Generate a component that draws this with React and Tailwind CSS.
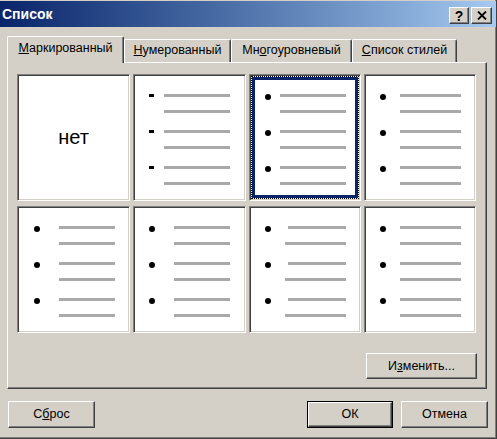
import React from "react";

const raised =
  "bg-[#d4d0c8] border-t border-l border-t-white border-l-white border-r border-b border-r-[#404040] border-b-[#404040] shadow-[inset_-1px_-1px_0_#808080]";

const cellBase =
  "bg-white h-[127px] border border-t-[#808080] border-l-[#808080] border-b-white border-r-white shadow-[inset_1px_1px_0_#404040,inset_-1px_-1px_0_#d4d0c8]";

function Bullet({ ml }) {
  return <div className={`${ml} w-[6px] h-[6px] rounded-full bg-black shrink-0`} />;
}

function Dash() {
  return <div className="ml-[15px] w-[5px] h-[3px] bg-black shrink-0" />;
}

function Row({ marker, line, children }) {
  return (
    <div className="flex h-[3px] items-start">
      <div className={`${marker} shrink-0 flex h-[3px] items-start`}>{children}</div>
      <div className={`${line} h-[3px] bg-[#a9a9a9]`} />
    </div>
  );
}

function Groups({ rows }) {
  return (
    <div className="flex flex-col gap-[17px]">
      {rows.map((g, i) => (
        <div key={i} className="flex flex-col gap-[13px]">
          {g}
        </div>
      ))}
    </div>
  );
}

function Cell2() {
  const group = (k) => [
    <Row key={k + "a"} marker="w-[30px]" line="w-[66px]">
      <Dash />
    </Row>,
    <Row key={k + "b"} marker="w-[30px]" line="w-[66px]" />,
  ];
  return (
    <div className={`${cellBase} pt-[19px]`}>
      <Groups rows={[group(1), group(2), group(3)]} />
    </div>
  );
}

function Cell3() {
  const group = (k) => [
    <Row key={k + "a"} marker="w-[25px]" line="w-[66px]">
      <Bullet ml="ml-[10px]" />
    </Row>,
    <Row key={k + "b"} marker="w-[25px]" line="w-[66px]" />,
  ];
  return (
    <div className={`${cellBase} p-[1px]`}>
      <div className="h-full border border-dotted border-black">
        <div className="h-full border-[3px] border-[#0a246a] pt-[14px]">
          <Groups rows={[group(1), group(2), group(3)]} />
        </div>
      </div>
    </div>
  );
}

function Cell4() {
  const group = (k) => [
    <Row key={k + "a"} marker="w-[35px]" line="w-[61px]">
      <Bullet ml="ml-[15px]" />
    </Row>,
    <Row key={k + "b"} marker="w-[35px]" line="w-[61px]" />,
  ];
  return (
    <div className={`${cellBase} pt-[19px]`}>
      <Groups rows={[group(1), group(2), group(3)]} />
    </div>
  );
}

function Cell5() {
  const group = (k) => [
    <Row key={k + "a"} marker="w-[41px]" line="w-[56px]">
      <Bullet ml="ml-[16px]" />
    </Row>,
    <Row key={k + "b"} marker="w-[41px]" line="w-[56px]" />,
  ];
  return (
    <div className={`${cellBase} pt-[19px]`}>
      <Groups rows={[group(1), group(2), group(3)]} />
    </div>
  );
}

function Cell6() {
  const group = (k) => [
    <Row key={k + "a"} marker="w-[40px]" line="w-[56px]">
      <Bullet ml="ml-[15px]" />
    </Row>,
    <Row key={k + "b"} marker="w-[40px]" line="w-[56px]" />,
  ];
  return (
    <div className={`${cellBase} pt-[19px]`}>
      <Groups rows={[group(1), group(2), group(3)]} />
    </div>
  );
}

function Cell7() {
  const group = (k) => [
    <Row key={k + "a"} marker="w-[38px]" line="w-[58px]">
      <Bullet ml="ml-[15px]" />
    </Row>,
    <Row key={k + "b"} marker="w-[35px]" line="w-[61px]" />,
  ];
  return (
    <div className={`${cellBase} pt-[19px]`}>
      <Groups rows={[group(1), group(2), group(3)]} />
    </div>
  );
}

function Tab({ active, w, children }) {
  if (active) {
    return (
      <div
        className={`${w} h-[27px] -mb-[1px] relative z-10 bg-[#d4d0c8] rounded-t-[2px] border-t border-l border-white border-r border-r-[#404040] shadow-[inset_-1px_0_0_#808080] flex items-center justify-center pb-[3px] text-[12.5px]`}
      >
        {children}
      </div>
    );
  }
  return (
    <div
      className={`${w} h-[23px] bg-[#d4d0c8] rounded-t-[2px] border-t border-l border-white border-r border-r-[#404040] shadow-[inset_-1px_0_0_#808080] flex items-center justify-center pb-[1px] text-[12.5px]`}
    >
      {children}
    </div>
  );
}

export default function App() {
  return (
    <div className="w-[497px] h-[439px] overflow-hidden bg-[#d4d0c8] font-['Liberation_Sans',Arial,sans-serif] text-black">
      <div className="w-[497px] h-[439px] pt-[1px] border-r border-b border-r-[#404040] border-b-[#404040] shadow-[inset_-1px_-1px_0_#808080] flex flex-col">
        {/* Title bar */}
        <div className="h-[26px] shrink-0 flex items-start justify-between bg-linear-to-r from-[#0a246a] to-[#a6caf0] pl-[2px] pr-[4px]">
          <div className="h-[26px] flex items-center text-white font-bold text-[14px]">Список</div>
          <div className="flex gap-[2px] pt-[6px]">
            <div className={`${raised} w-[20px] h-[17px] flex items-center justify-center text-[14px] font-bold leading-none`}>
              ?
            </div>
            <div className={`${raised} w-[21px] h-[17px] flex items-center justify-center`}>
              <svg width="10" height="9" viewBox="0 0 10 9">
                <path d="M1 0.5 L9 8.5 M9 0.5 L1 8.5" stroke="black" strokeWidth="1.8" fill="none" />
              </svg>
            </div>
          </div>
        </div>

        {/* Tabs */}
        <div className="mt-[9px] h-[26px] shrink-0 flex items-end pl-[7px]">
          <Tab active w="w-[117px]">
            <span>
              <u>М</u>аркированный
            </span>
          </Tab>
          <Tab w="w-[107px]">
            <span>
              <u>Н</u>умерованный
            </span>
          </Tab>
          <Tab w="w-[121px]">
            <span>
              Мн<u>о</u>гоуровневый
            </span>
          </Tab>
          <Tab w="w-[105px]">
            <span>
              <u>С</u>писок стилей
            </span>
          </Tab>
        </div>

        {/* Panel */}
        <div className="ml-[7px] w-[480px] h-[327px] shrink-0 border-t border-l border-white border-r border-b border-r-[#404040] border-b-[#404040] shadow-[inset_-1px_-1px_0_#808080] pt-[11px] pl-[9px] pr-[9px]">
          <div className="grid grid-cols-[113px_113px_112px_112px] gap-x-[3px] gap-y-[5px]">
            <div className={`${cellBase} flex items-center justify-center`}>
              <span className="text-[20px] pb-[1px]">нет</span>
            </div>
            <Cell2 />
            <Cell3 />
            <Cell4 />
            <Cell5 />
            <Cell6 />
            <Cell7 />
            <Cell4 />
          </div>
          <div className="mt-[20px] flex justify-end">
            <div className={`${raised} w-[111px] h-[26px] flex items-center justify-center text-[12.5px]`}>
              <span>
                И<u>з</u>менить...
              </span>
            </div>
          </div>
        </div>

        {/* Bottom buttons */}
        <div className="mt-[12px] flex pl-[8px] pr-[8px]">
          <div className={`${raised} w-[87px] h-[27px] flex items-center justify-center text-[12.5px]`}>
            <span>
              С<u>б</u>рос
            </span>
          </div>
          <div className="ml-auto flex gap-[8px]">
            <div className="w-[86px] h-[27px] border border-black">
              <div className={`${raised} w-full h-full flex items-center justify-center text-[12.5px]`}>ОК</div>
            </div>
            <div className={`${raised} w-[87px] h-[27px] flex items-center justify-center text-[12.5px]`}>Отмена</div>
          </div>
        </div>
      </div>
    </div>
  );
}
